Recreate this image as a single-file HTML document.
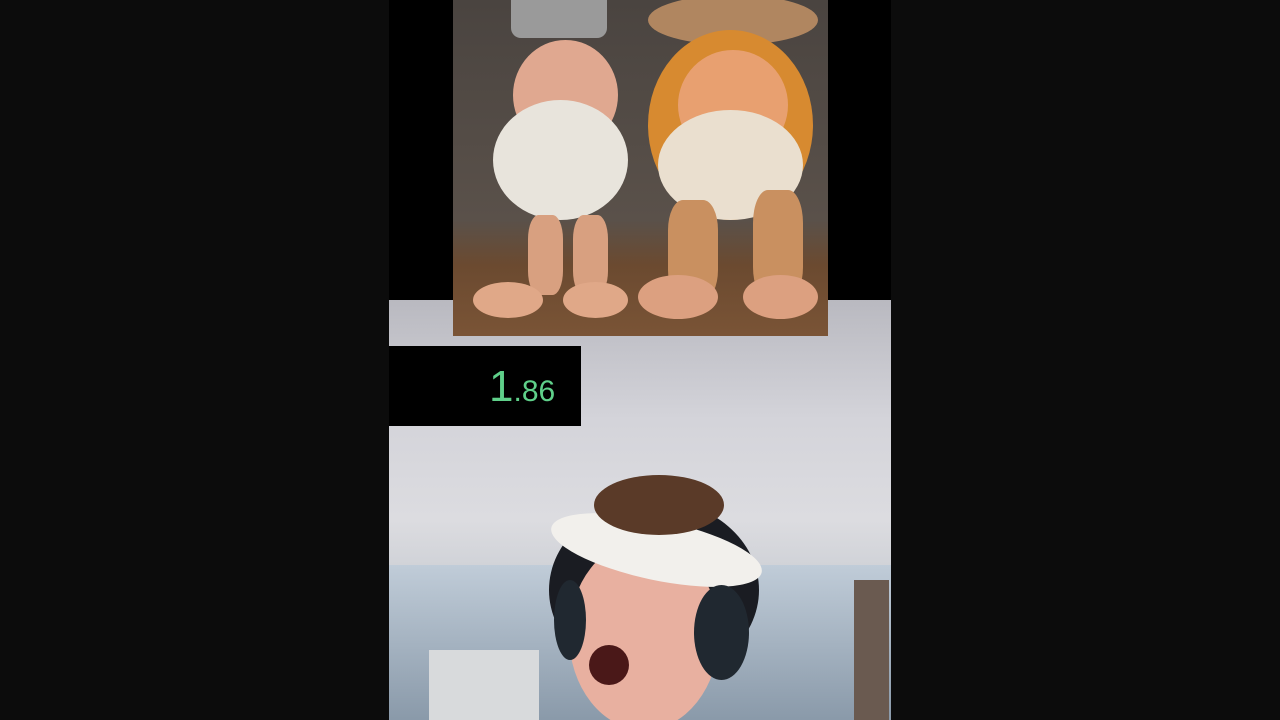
<!DOCTYPE html>
<html><head><style>
body{margin:0;width:1280px;height:720px;background:#0c0c0c;overflow:hidden;position:relative;font-family:"Liberation Sans",sans-serif}
.v{position:absolute;left:389px;top:0;width:502px;height:720px;overflow:hidden;background:linear-gradient(180deg,#b9b9c0 300px,#d4d4da 420px,#dcdce0 520px,#c8ccd2 600px,#aab4c0 720px)}
.top{position:absolute;left:0;top:0;width:502px;height:300px;background:#000}
.img{position:absolute;left:64px;top:0;width:375px;height:336px;background:linear-gradient(180deg,#4a4440 0,#5a514a 220px,#6b4a30 265px,#7a5436 336px)}
.e{position:absolute;border-radius:50%}
.box{position:absolute;left:0;top:346px;width:192px;height:80px;background:#000}
.t{position:absolute;left:100px;top:362px;color:#5fd08a;font-size:44px}
.t span{font-size:30px}
</style></head><body>
<div class="v">
<div class="top"></div>
<div class="img">
 <div class="e" style="left:58px;top:-10px;width:96px;height:48px;background:#9a9a9a;border-radius:10px"></div>
 <div class="e" style="left:195px;top:-5px;width:170px;height:50px;background:#b08660"></div>
 <div class="e" style="left:60px;top:40px;width:105px;height:110px;background:#e0a890"></div>
 <div class="e" style="left:40px;top:100px;width:135px;height:120px;background:#e8e4dc"></div>
 <div class="e" style="left:195px;top:30px;width:165px;height:190px;background:#d78a30"></div>
 <div class="e" style="left:225px;top:50px;width:110px;height:110px;background:#e8a070"></div>
 <div class="e" style="left:205px;top:110px;width:145px;height:110px;background:#eadfcf"></div>
 <div class="e" style="left:75px;top:215px;width:35px;height:80px;background:#d8a080;border-radius:30%"></div>
 <div class="e" style="left:120px;top:215px;width:35px;height:80px;background:#d8a080;border-radius:30%"></div>
 <div class="e" style="left:20px;top:282px;width:70px;height:36px;background:#e0a888"></div>
 <div class="e" style="left:110px;top:282px;width:65px;height:36px;background:#e0a888"></div>
 <div class="e" style="left:215px;top:200px;width:50px;height:100px;background:#c99060;border-radius:30%"></div>
 <div class="e" style="left:300px;top:190px;width:50px;height:110px;background:#c99060;border-radius:30%"></div>
 <div class="e" style="left:185px;top:275px;width:80px;height:44px;background:#dca080"></div>
 <div class="e" style="left:290px;top:275px;width:75px;height:44px;background:#dca080"></div>
</div>
<div class="box"></div>
<div class="t">1<span>.86</span></div>
<div class="e" style="left:0;top:565px;width:502px;height:160px;background:linear-gradient(180deg,#c0ccd8,#8898a8);border-radius:0"></div>
<div class="e" style="left:40px;top:650px;width:110px;height:70px;background:#d8dadc;border-radius:0"></div>
<div class="e" style="left:465px;top:580px;width:35px;height:140px;background:#6a5a50;border-radius:0"></div>
<div class="e" style="left:160px;top:500px;width:210px;height:180px;background:#1a1c22"></div>
<div class="e" style="left:180px;top:540px;width:150px;height:190px;background:#e8b0a0"></div>
<div class="e" style="left:160px;top:520px;width:215px;height:60px;background:#f2f0ec;transform:rotate(12deg)"></div>
<div class="e" style="left:205px;top:475px;width:130px;height:60px;background:#5a3a28"></div>
<div class="e" style="left:165px;top:580px;width:32px;height:80px;background:#202830"></div>
<div class="e" style="left:305px;top:585px;width:55px;height:95px;background:#202830"></div>
<div class="e" style="left:200px;top:645px;width:40px;height:40px;background:#4a1818"></div>
</div>
</body></html>
